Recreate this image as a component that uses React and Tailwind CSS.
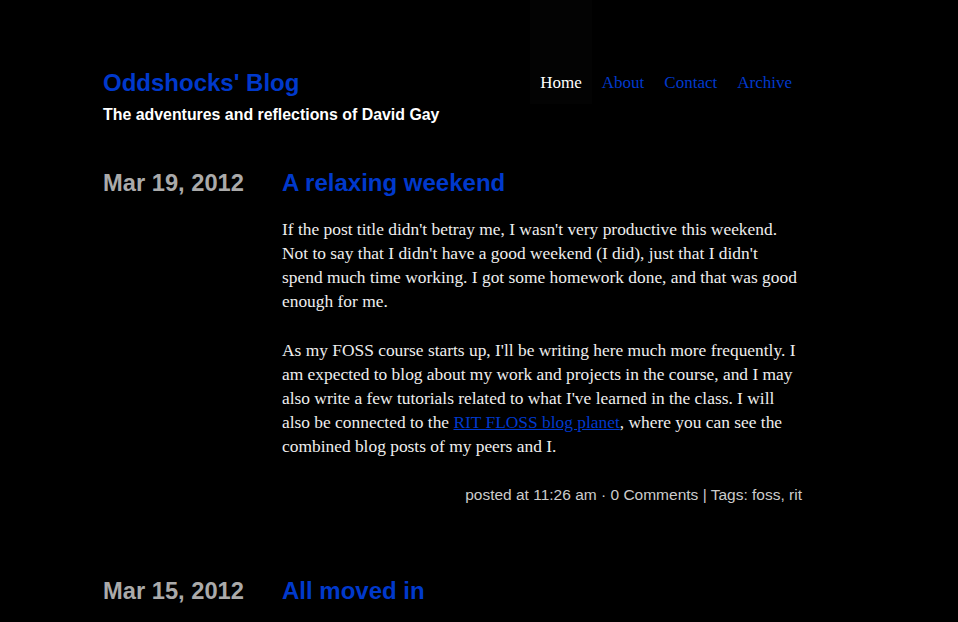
import React from 'react';

const navLinks = [
  { label: 'Home', active: true },
  { label: 'About' },
  { label: 'Contact' },
  { label: 'Archive' },
];

const Post = ({ date, title, children, meta }) => (
  <div className="flex">
    <div className="w-[179px] shrink-0 text-[23.7px] leading-[28px] font-bold text-[#aaaaaa]">{date}</div>
    <div className="w-[520px]">
      <h2 className="text-[24px] leading-[28px] font-bold text-[#0039cc]">{title}</h2>
      {children && (
        <div className="mt-[20px] font-['Liberation_Serif',serif] text-[17.4px] leading-[24px] text-[#eeeeee]">
          {children}
        </div>
      )}
      {meta && <p className="mt-[27px] text-right text-[15.5px] leading-[20px] text-[#cccccc]">{meta}</p>}
    </div>
  </div>
);

export default function App() {
  return (
    <div className="min-h-screen bg-black font-['Liberation_Sans',Arial,sans-serif] pl-[103px]">
      <div className="w-[699px]">
        {/* Header */}
        <header className="flex items-start justify-between">
          <div className="pt-[69px]">
            <h1 className="text-[24px] leading-[28px] font-bold text-[#0039cc]">Oddshocks' Blog</h1>
            <p className="mt-[8px] text-[15.9px] leading-[20px] font-bold text-white">
              The adventures and reflections of David Gay
            </p>
          </div>
          <nav className="flex font-['Liberation_Serif',serif] text-[17px] leading-[20px]">
            {navLinks.map((link) => (
              <a
                key={link.label}
                href="#"
                className={`px-[10px] pt-[73px] pb-[11px] ${
                  link.active ? 'bg-[#030303] text-white' : 'text-[#0039cc]'
                }`}
              >
                {link.label}
              </a>
            ))}
          </nav>
        </header>

        {/* Posts */}
        <main className="mt-[44px]">
          <Post
            date="Mar 19, 2012"
            title="A relaxing weekend"
            meta="posted at 11:26 am · 0 Comments | Tags: foss, rit"
          >
            <p>
              If the post title didn't betray me, I wasn't very productive this weekend. Not to say that I didn't
              have a good weekend (I did), just that I didn't spend much time working. I got some homework done, and
              that was good enough for me.
            </p>
            <p className="mt-[25px]">
              As my FOSS course starts up, I'll be writing here much more frequently. I am expected to blog about my
              work and projects in the course, and I may also write a few tutorials related to what I've learned in
              the class. I will also be connected to the{' '}
              <a href="#" className="text-[#0039cc] underline">
                RIT FLOSS blog planet
              </a>
              , where you can see the combined blog posts of my peers and I.
            </p>
          </Post>
          <div className="mt-[72px]">
            <Post date="Mar 15, 2012" title="All moved in" />
          </div>
        </main>
      </div>
    </div>
  );
}
